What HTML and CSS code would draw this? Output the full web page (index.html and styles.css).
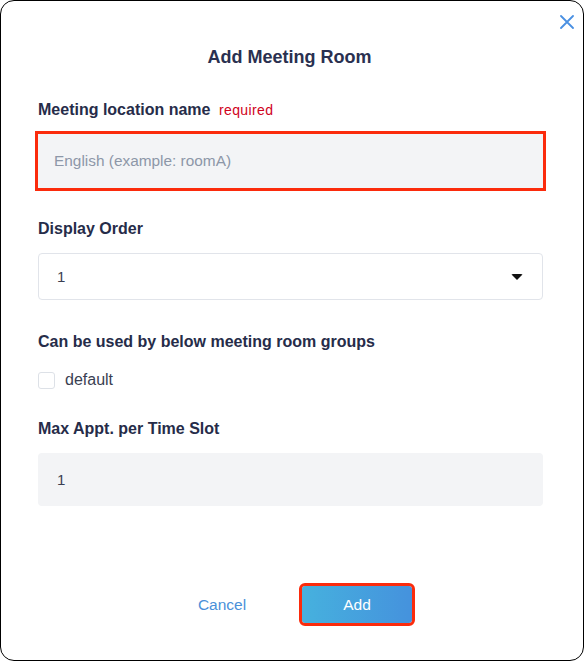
FILE: index.html
```html
<!DOCTYPE html>
<html lang="en">
<head>
  <meta charset="UTF-8">
  <meta name="viewport" content="width=device-width, initial-scale=1.0">
  <title>Add Meeting Room</title>
  <link rel="stylesheet" href="styles.css">
</head>
<body>
<div class="dialog">
  <button class="close" aria-label="Close">
    <svg width="14" height="14" viewBox="0 0 14 14">
      <path d="M1 1 L13 13 M13 1 L1 13" stroke="#4a90e2" stroke-width="1.8" fill="none" stroke-linecap="round"/>
    </svg>
  </button>

  <h1 class="title">Add Meeting Room</h1>

  <div class="field name-field">
    <div class="label">Meeting location name <span class="required">required</span></div>
    <div class="input highlight">
      <span class="placeholder">English (example: roomA)</span>
    </div>
  </div>

  <div class="field order-field">
    <div class="label">Display Order</div>
    <div class="select">
      <span>1</span>
      <span class="caret"></span>
    </div>
  </div>

  <div class="field group-field">
    <div class="label">Can be used by below meeting room groups</div>
    <label class="check-row">
      <span class="checkbox"></span>
      <span>default</span>
    </label>
  </div>

  <div class="field max-field">
    <div class="label">Max Appt. per Time Slot</div>
    <div class="input small">
      <span>1</span>
    </div>
  </div>

  <div class="footer">
    <button class="btn-cancel">Cancel</button>
    <button class="btn-add">Add</button>
  </div>
</div>
</body>
</html>
```

FILE: styles.css
```css
* {
    margin: 0;
    padding: 0;
    box-sizing: border-box;
}

html, body {
    background: #fff;
}

body {
    font-family: "Liberation Sans", Arial, sans-serif;
    color: #262c49;
}

.dialog {
    position: relative;
    width: 584px;
    height: 661px;
    border: 1px solid #000;
    border-radius: 14px;
    padding: 45px 40px 37px 37px;
    display: flex;
    flex-direction: column;
}

.close {
    position: absolute;
    top: 14px;
    right: 9px;
    width: 14px;
    height: 14px;
    border: none;
    background: none;
    cursor: pointer;
    display: flex;
}

.title {
    font-size: 18px;
    font-weight: bold;
    line-height: 22px;
    text-align: center;
    color: #2a3050;
    margin-left: -2px;
}

.field {
    margin-top: 30px;
}

.name-field {
    margin-top: 32px;
}

.order-field {
    margin-top: 31px;
}

.group-field {
    margin-top: 32px;
}

.max-field {
    margin-top: 29px;
}

.label {
    font-size: 16px;
    font-weight: bold;
    line-height: 20px;
    margin-bottom: 14px;
    color: #262c49;
}

.required {
    font-size: 14px;
    font-weight: normal;
    letter-spacing: 0.4px;
    color: #d0021b;
    margin-left: 4px;
}

.input {
    height: 54px;
    background: #f3f4f6;
    border-radius: 4px;
    display: flex;
    align-items: center;
    padding-left: 19px;
    font-size: 15px;
    color: #3a3f52;
}

.input.highlight {
    border-radius: 0;
    outline: 3px solid #fb2b0c;
    outline-offset: 0;
    padding-left: 16px;
}

.input.small {
    height: 53px;
    margin-top: 1px;
}

.placeholder {
    color: #8d97a8;
    font-size: 15.4px;
}

.select {
    height: 47px;
    border: 1px solid #e1e4ea;
    border-radius: 4px;
    display: flex;
    align-items: center;
    justify-content: space-between;
    padding: 0 19px 0 18px;
    font-size: 15px;
    color: #3a3f52;
    margin-top: 1px;
}

.caret {
    width: 0;
    height: 0;
    border-left: 6px solid transparent;
    border-right: 6px solid transparent;
    border-top: 6px solid #111;
    border-radius: 2px;
}

.check-row {
    display: flex;
    align-items: center;
    gap: 10px;
    height: 20px;
    margin-top: 18px;
    font-size: 16px;
    color: #3a3f52;
    cursor: pointer;
}

.checkbox {
    width: 17px;
    height: 17px;
    border: 1px solid #dde1e7;
    border-radius: 3px;
    background: #fff;
}

.footer {
    margin-top: auto;
    display: flex;
    justify-content: center;
    gap: 30px;
    margin-left: 3px;
}

.btn-cancel {
    width: 100px;
    height: 37px;
    border: none;
    background: none;
    color: #4a90d9;
    font-family: inherit;
    font-size: 15.5px;
    cursor: pointer;
}

.btn-add {
    width: 110px;
    height: 37px;
    border: none;
    border-radius: 3px;
    background: linear-gradient(90deg, #46b1de, #4592dd);
    color: #fff;
    font-family: inherit;
    font-size: 15.5px;
    cursor: pointer;
    outline: 3px solid #fb2b0c;
    outline-offset: 0;
}
```
